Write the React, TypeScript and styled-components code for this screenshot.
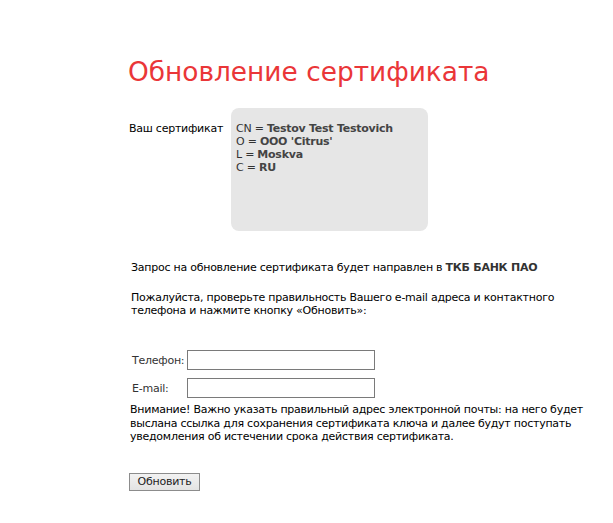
import styled, { createGlobalStyle } from 'styled-components';

const GlobalStyle = createGlobalStyle`
    html, body {
        margin: 0;
        padding: 0;
        background: #fff;
    }
    body {
        font-family: 'DejaVu Sans', Verdana, sans-serif;
        font-size: 11px;
        letter-spacing: -0.25px;
        color: #000;
    }
`;

const certFields = [
    { key: 'CN', value: 'Testov Test Testovich' },
    { key: 'O', value: "OOO 'Citrus'" },
    { key: 'L', value: 'Moskva' },
    { key: 'C', value: 'RU' },
];

function App() {
    return (
        <Page>
            <GlobalStyle />
            <Title>Обновление сертификата</Title>
            <CertRow>
                <CertLabel>Ваш сертификат</CertLabel>
                <CertBox>
                    {certFields.map((f) => (
                        <div key={f.key}>
                            {f.key} = <b>{f.value}</b>
                        </div>
                    ))}
                </CertBox>
            </CertRow>
            <Paragraph>
                Запрос на обновление сертификата будет направлен в <b>ТКБ БАНК ПАО</b>
            </Paragraph>
            <Paragraph $gap={17}>
                Пожалуйста, проверьте правильность Вашего e-mail адреса и контактного
                <br />
                телефона и нажмите кнопку «Обновить»:
            </Paragraph>
            <Form>
                <FieldLabel>Телефон:</FieldLabel>
                <Input type="text" />
                <FieldLabel>E-mail:</FieldLabel>
                <Input type="text" />
            </Form>
            <Warning>
                Внимание! Важно указать правильный адрес электронной почты: на него будет
                <br />
                выслана ссылка для сохранения сертификата ключа и далее будут поступать
                <br />
                уведомления об истечении срока действия сертификата.
            </Warning>
            <Button type="button">Обновить</Button>
        </Page>
    );
}

const Page = styled.div`
    padding: 52px 0 0 128px;
    width: 485px;
`;

const Title = styled.h1`
    margin: 0;
    font-family: 'DejaVu Sans', Verdana, sans-serif;
    font-weight: normal;
    font-size: 26.4px;
    letter-spacing: 0;
    line-height: 40px;
    color: #ea3638;
`;

const CertRow = styled.div`
    display: flex;
    margin-top: 16px;
    margin-left: 1px;
`;

const CertLabel = styled.div`
    width: 102px;
    padding-top: 14px;
    line-height: 13px;
`;

const CertBox = styled.div`
    width: 192px;
    height: 109px;
    padding: 14px 0 0 5px;
    background: #e6e6e6;
    border-radius: 8px;
    color: #333;
    line-height: 13px;

    b {
        color: #444;
    }
`;

const Paragraph = styled.p<{ $gap?: number }>`
    margin: ${(p) => p.$gap ?? 30}px 0 0 3px;
    line-height: 13px;

    b {
        color: #333;
    }
`;

const Form = styled.div`
    display: grid;
    grid-template-columns: 55px 188px;
    row-gap: 8px;
    align-items: center;
    margin: 33px 0 0 4px;
`;

const FieldLabel = styled.label`
    color: #333;
`;

const Input = styled.input`
    box-sizing: border-box;
    width: 188px;
    height: 20px;
    margin: 0;
    border: 1px solid #7a7a7a;
    padding: 1px 3px;
    font: inherit;
`;

const Warning = styled.p`
    margin: 5px 0 0 2px;
    line-height: 13.5px;
`;

const Button = styled.button`
    box-sizing: border-box;
    display: block;
    margin: 29px 0 0 1px;
    width: 71px;
    height: 18px;
    padding: 0;
    border: 1px solid #8c8c8c;
    background: linear-gradient(#f2f2f2, #e3e3e3);
    font-family: 'DejaVu Sans', Verdana, sans-serif;
    font-size: 11px;
    letter-spacing: -0.25px;
    color: #222;
    cursor: pointer;
`;

export default App;
